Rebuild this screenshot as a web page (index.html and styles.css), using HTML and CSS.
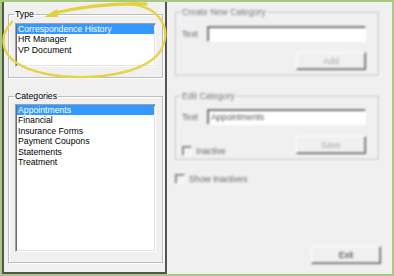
FILE: index.html
```html
<!DOCTYPE html>
<html>
<head>
<meta charset="utf-8">
<link rel="stylesheet" href="styles.css">
</head>
<body>
<div class="window">
  <div class="left">
    <fieldset class="group type-group">
      <legend>Type</legend>
      <ul class="listbox type-list">
        <li class="sel">Correspondence History</li>
        <li>HR Manager</li>
        <li>VP Document</li>
      </ul>
    </fieldset>
    <fieldset class="group cat-group">
      <legend>Categories</legend>
      <ul class="listbox cat-list">
        <li class="sel">Appointments</li>
        <li>Financial</li>
        <li>Insurance Forms</li>
        <li>Payment Coupons</li>
        <li>Statements</li>
        <li>Treatment</li>
      </ul>
    </fieldset>
  </div>
  <div class="right">
    <fieldset class="group rgroup create">
      <legend>Create New Category</legend>
      <div class="field"><span class="lbl">Text</span><span class="textbox"></span></div>
      <div class="actions"><span class="btn disabled">Add</span></div>
    </fieldset>
    <fieldset class="group rgroup edit">
      <legend>Edit Category</legend>
      <div class="field"><span class="lbl">Text</span><span class="textbox">Appointments</span></div>
      <div class="actions spread">
        <span class="check"><span class="box"></span>Inactive</span>
        <span class="btn disabled">Save</span>
      </div>
    </fieldset>
    <span class="check show"><span class="box"></span>Show Inactives</span>
    <div class="exit-row"><span class="btn exit">Exit</span></div>
  </div>
  <svg class="annot" width="394" height="276" viewBox="0 0 394 276">
    <path class="loop" d="M 128 4 C 162 6, 174 32, 159 53 C 146 70, 110 78, 75 77 C 40 76, 8 66, 4 46 C 2 36, 6 28, 12 22"/>
    <path class="swoosh" d="M 54 13 C 80 7, 110 3, 146 4"/>
    <polygon class="head" points="44,17 57,9 58,17"/>
  </svg>
</div>
</body>
</html>
```
FILE: styles.css
```css
html, body {
  margin: 0;
  padding: 0;
  background: #f0f0f0;
}

body {
  font-family: "Liberation Sans", Arial, sans-serif;
  font-size: 8.7px;
  color: #000;
}

.window {
  position: relative;
  width: 394px;
  height: 276px;
  box-sizing: border-box;
  border: 2px solid #a8ca80;
  background: #f0f0f0;
  display: flex;
  overflow: hidden;
}

.left {
  width: 165px;
  height: 274px;
  margin-top: -2px;
  box-sizing: border-box;
  border: 2px solid #545454;
  padding: 2px 0 0 4px;
  display: flex;
  flex-direction: column;
  flex: none;
}

.group {
  margin: 0;
  box-sizing: border-box;
  border: 1px solid #bcbcbc;
  box-shadow: inset 1px 1px 0 #fff, 1px 1px 0 #fff;
  padding: 0 6px;
  min-width: 0;
}

.group legend {
  padding: 0 1px;
  margin-left: -1px;
  line-height: 10px;
  height: 10px;
}

.type-group {
  width: 155px;
  margin-top: 5px;
  padding-top: 4px;
  padding-bottom: 10px;
}

.cat-group {
  width: 155px;
  margin-top: 13px;
  padding-top: 3px;
  padding-bottom: 10px;
}

.listbox {
  list-style: none;
  margin: 0;
  padding: 0 1px;
  background: #fff;
  border: 1px solid;
  border-color: #a0a0a0 #fff #fff #a0a0a0;
  box-shadow: inset 1px 1px 0 #6b6b6b, inset -1px -1px 0 #e3e3e3;
  box-sizing: border-box;
}

.type-list { height: 44px; }
.cat-list { height: 148px; }

.listbox li {
  line-height: 10.4px;
  height: 10.4px;
  padding-left: 1px;
  white-space: nowrap;
}

.listbox li.sel {
  background: #3399ff;
  color: #fff;
}

.right {
  flex: 1;
  display: flex;
  flex-direction: column;
  padding: 0 14px 0 8px;
  filter: blur(1.3px);
  color: #6e6e6e;
}

.rgroup {
  width: 204px;
  padding: 0 12px 0 6px;
}

.rgroup legend {
  color: #707070;
}

.create {
  margin-top: 5px;
  padding-bottom: 5px;
}

.edit {
  margin-top: 15px;
  padding-bottom: 5px;
}

.field {
  display: flex;
  align-items: center;
  margin-top: 9px;
}

.edit .field { margin-top: 8px; }

.lbl {
  width: 25px;
  flex: none;
  color: #666;
}

.textbox {
  flex: 1;
  height: 16px;
  box-sizing: border-box;
  background: #fff;
  border: 1px solid;
  border-color: #8a8a8a #fff #fff #8a8a8a;
  box-shadow: inset 1px 1px 0 #5e5e5e;
  padding-left: 3px;
  line-height: 14px;
  color: #555;
}

.actions {
  display: flex;
  justify-content: flex-end;
  margin-top: 10px;
}

.edit .actions {
  margin-top: 11px;
}

.actions.spread {
  justify-content: space-between;
  align-items: flex-end;
}

.btn {
  width: 70px;
  height: 18px;
  box-sizing: border-box;
  display: flex;
  align-items: center;
  justify-content: center;
  border: 1px solid;
  border-color: #fff #5a5a5a #5a5a5a #fff;
  box-shadow: inset -1px -1px 0 #a0a0a0;
  background: #f0f0f0;
  color: #333;
}

.btn.disabled {
  color: #a8a8a8;
}

.check {
  display: flex;
  align-items: center;
  gap: 4px;
  color: #666;
  margin-bottom: -2px;
}

.box {
  width: 10px;
  height: 10px;
  box-sizing: border-box;
  border: 1px solid;
  border-color: #7a7a7a #fff #fff #7a7a7a;
  box-shadow: inset 1px 1px 0 #a0a0a0;
  background: #f4f4f4;
}

.show {
  margin-top: 14px;
  margin-left: 0;
}

.exit-row {
  margin-top: auto;
  margin-bottom: 10px;
  margin-right: -2px;
  display: flex;
  justify-content: flex-end;
}

.annot {
  position: absolute;
  left: -2px;
  top: -2px;
  pointer-events: none;
}

.annot .loop {
  fill: none;
  stroke: #e4d448;
  stroke-width: 2.4;
  stroke-linecap: round;
}

.annot .swoosh {
  fill: none;
  stroke: #e2d03c;
  stroke-width: 3.2;
  stroke-linecap: round;
}

.annot .head {
  fill: #e2d03c;
}
```
